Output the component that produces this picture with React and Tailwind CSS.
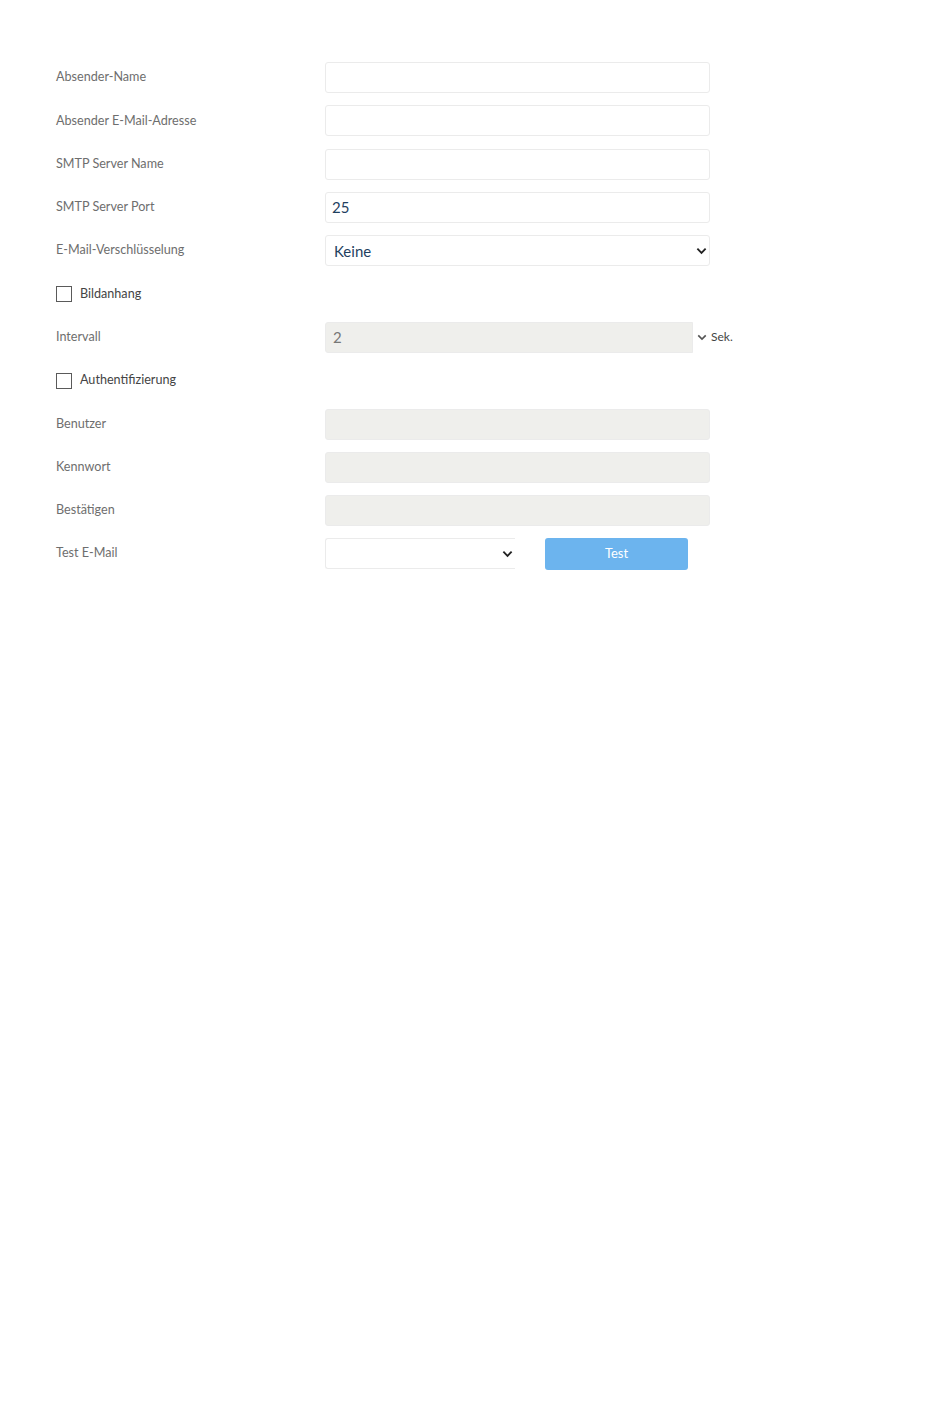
import React from "react";

function Chevron({ className }) {
  return (
    <svg viewBox="0 0 12 8" className={className} fill="none" stroke="currentColor" strokeWidth="2">
      <path d="M1.5 1.5 6 6l4.5-4.5" />
    </svg>
  );
}

function Row({ label, children }) {
  return (
    <div className="flex h-[43.3px] items-center">
      <div className="w-[269px] text-[12.6px] text-[#6e6e6e]">{label}</div>
      {children}
    </div>
  );
}

function TextBox({ value, disabled }) {
  return (
    <div
      className={
        "flex h-[31px] w-[385px] items-center rounded-[3px] border border-[#ebebeb] px-[6px] text-[15px] text-[#1f3f5f] " +
        (disabled ? "bg-[#efefec]" : "bg-white")
      }
    >
      {value}
    </div>
  );
}

function CheckRow({ label }) {
  return (
    <div className="flex h-[43.3px] items-center">
      <span className="h-[16px] w-[16px] border border-[#5a5a5a] bg-white" />
      <span className="ml-[8px] text-[12.6px] text-[#444]">{label}</span>
    </div>
  );
}

export default function App() {
  return (
    <div className="min-h-[1409px] bg-white pl-[56px] pt-[56px]" style={{ fontFamily: "Lato, 'Liberation Sans', sans-serif" }}>
      <Row label="Absender-Name">
        <TextBox />
      </Row>
      <Row label="Absender E-Mail-Adresse">
        <TextBox />
      </Row>
      <Row label="SMTP Server Name">
        <TextBox />
      </Row>
      <Row label="SMTP Server Port">
        <TextBox value="25" />
      </Row>
      <Row label="E-Mail-Verschlüsselung">
        <div className="flex h-[31px] w-[385px] items-center justify-between rounded-[3px] border border-[#ebebeb] bg-white pl-[8px] pr-[2px] text-[15px] text-[#1f3f5f]">
          <span>Keine</span>
          <Chevron className="h-[8px] w-[11px] text-[#222]" />
        </div>
      </Row>
      <CheckRow label="Bildanhang" />
      <Row label="Intervall">
        <div className="flex h-[31px] items-center">
          <div className="flex h-full w-[368px] items-center rounded-l-[3px] border border-[#ebebeb] bg-[#efefec] px-[7px] text-[15px] text-[#777]">
            2
          </div>
          <Chevron className="ml-[4px] h-[7px] w-[10px] text-[#555]" />
          <span className="ml-[4px] text-[12px] text-[#444]">Sek.</span>
        </div>
      </Row>
      <CheckRow label="Authentifizierung" />
      <Row label="Benutzer">
        <TextBox disabled />
      </Row>
      <Row label="Kennwort">
        <TextBox disabled />
      </Row>
      <Row label="Bestätigen">
        <TextBox disabled />
      </Row>
      <Row label="Test E-Mail">
        <div className="flex items-center">
          <div className="flex h-[31px] w-[190px] items-center justify-end rounded-l-[3px] border border-r-0 border-[#ebebeb] bg-white pr-[2px]">
            <Chevron className="h-[8px] w-[11px] text-[#222]" />
          </div>
          <button className="ml-[30px] h-[32px] w-[143px] rounded-[3px] bg-[#6cb4ee] text-[13px] text-white">
            Test
          </button>
        </div>
      </Row>
    </div>
  );
}
